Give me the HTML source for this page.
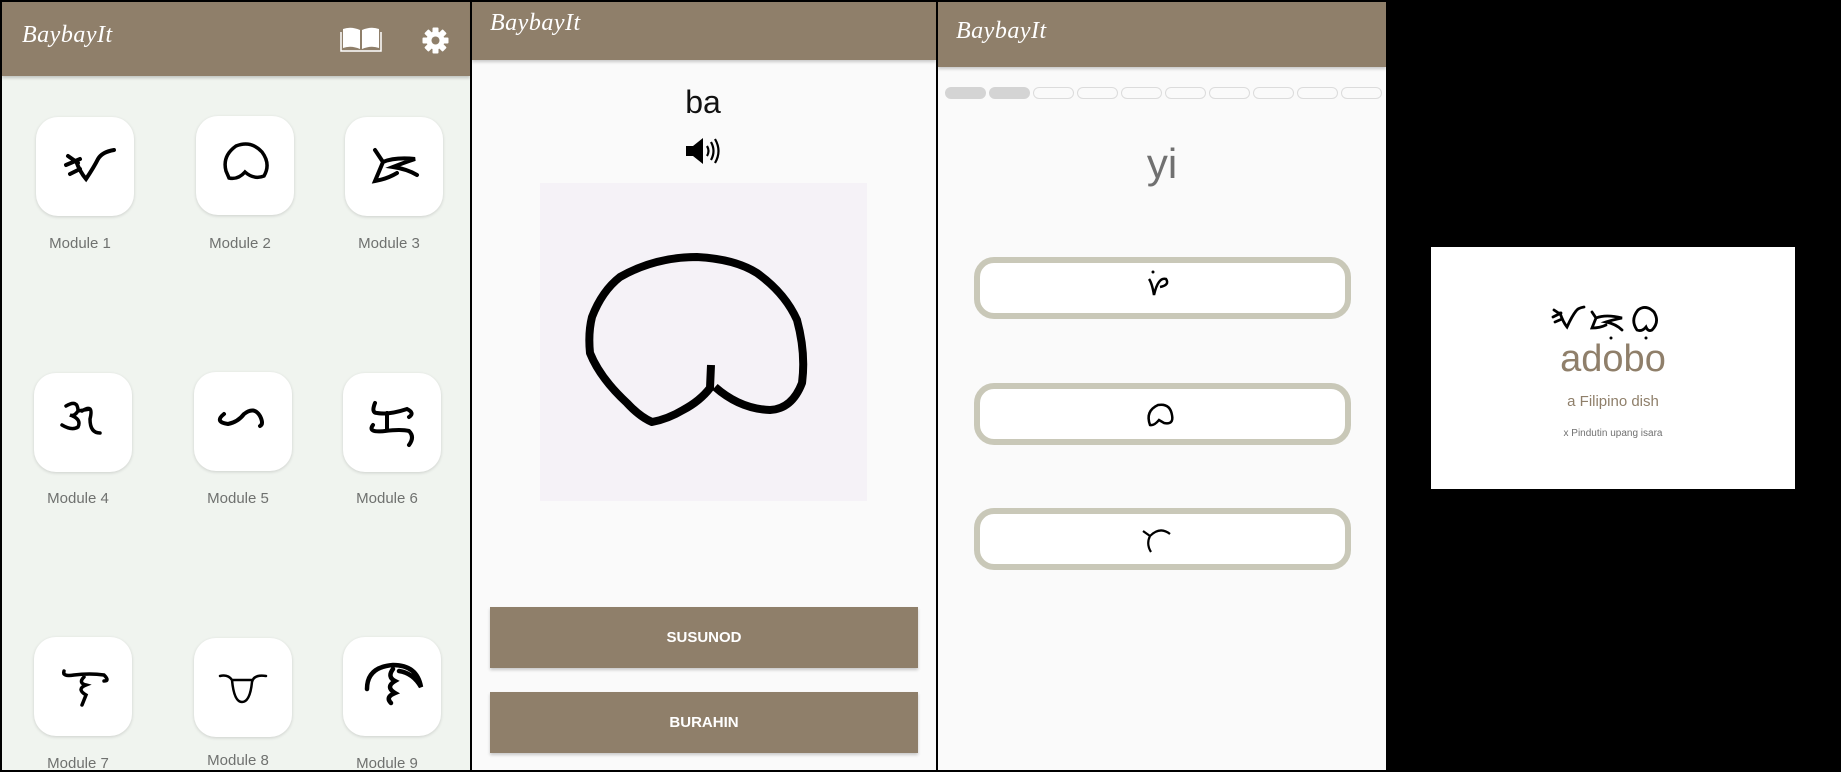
<!DOCTYPE html>
<html><head><meta charset="utf-8">
<style>
*{margin:0;padding:0;box-sizing:border-box}
body{width:1841px;height:772px;background:#000;position:relative;overflow:hidden;font-family:"Liberation Sans",Roboto,sans-serif}
.abs{position:absolute}
.logo{font-family:"Liberation Serif",serif;font-style:italic;color:#fff;font-size:24px;letter-spacing:0.5px}
.tile{position:absolute;width:98px;height:99px;background:#fff;border-radius:22px;box-shadow:0 1px 3px rgba(0,0,0,.15)}
.tile svg{position:absolute;left:0;top:0}
.lbl{position:absolute;width:140px;text-align:center;font-size:15px;color:#6f716f}
.btn{position:absolute;left:490px;width:428px;height:61px;background:#8f7f6a;color:#fff;font-weight:bold;font-size:15px;text-align:center;line-height:61px;box-shadow:0 2px 3px rgba(0,0,0,.2)}
.opt{position:absolute;left:974px;width:377px;height:62px;border:6px solid #c9c8b8;border-radius:20px;background:#fff}
.pill{position:absolute;top:87px;width:41px;height:12px;border-radius:6px;border:1px solid #dcdcdc;background:#fafafa}
</style></head><body>

<!-- Panel 1 -->
<div class="abs" style="left:2px;top:2px;width:468px;height:768px;background:#f0f4ef"></div>
<div class="abs" style="left:2px;top:2px;width:468px;height:74px;background:#8f7f6a;box-shadow:0 2px 3px rgba(0,0,0,.2)"></div>
<div class="abs logo" style="left:22px;top:22px">BaybayIt</div>
<svg class="abs" style="left:340px;top:26px" width="42" height="27" viewBox="0 0 42 27">
<path d="M3 3 Q11 0 20 4 V23 Q11 19 3 22 Z M22 4 Q31 0 39 3 V22 Q31 19 22 23 Z" fill="#fff"/>
<path d="M1 6 V25 H41 V6" fill="none" stroke="#fff" stroke-width="1.5"/>
</svg>
<svg class="abs" style="left:422px;top:27px" width="27" height="27" viewBox="-13.5 -13.5 27 27">
<g fill="#fff"><circle r="9"/>
<rect x="-3" y="-13" width="6" height="26" rx="1"/>
<rect x="-3" y="-13" width="6" height="26" rx="1" transform="rotate(45)"/>
<rect x="-3" y="-13" width="6" height="26" rx="1" transform="rotate(90)"/>
<rect x="-3" y="-13" width="6" height="26" rx="1" transform="rotate(135)"/></g>
<circle r="4" fill="#8f7f6a"/>
</svg>

<div class="tile" style="left:36px;top:117px"><svg width="98" height="99"><g fill="none" stroke="#000" stroke-width="4" stroke-linecap="round"><path d="M32 39 L42 46 M30 48 L44 42 M34 57 L44 52 M40 44 Q44 55 50 62 Q58 50 62 42 Q66 35 78 33"/></g></svg></div>
<div class="tile" style="left:196px;top:116px"><svg width="98" height="99"><path d="M30 55 Q26 40 40 30 Q55 24 66 36 Q75 48 68 60 Q58 64 49 56 Q42 64 33 62 Z" fill="none" stroke="#000" stroke-width="3.5"/></svg></div>
<div class="tile" style="left:345px;top:117px"><svg width="98" height="99"><path d="M30 33 L38 45 Q50 40 70 42 Q58 46 48 50 Q62 52 72 58 M38 45 L30 64 Q42 62 52 56" fill="none" stroke="#000" stroke-width="4" stroke-linecap="round"/></svg></div>

<div class="tile" style="left:34px;top:373px"><svg width="98" height="99"><path d="M32 33 Q44 26 44 38 Q40 44 36 42 Q48 46 44 54 Q38 58 28 52 M48 38 Q60 30 56 46 Q56 60 66 60 M44 38 L56 36" fill="none" stroke="#000" stroke-width="3.5" stroke-linecap="round"/></svg></div>
<div class="tile" style="left:194px;top:372px"><svg width="98" height="99"><path d="M30 42 Q20 50 34 52 Q44 50 50 42 Q60 34 66 44 Q70 52 66 54" fill="none" stroke="#000" stroke-width="4" stroke-linecap="round"/></svg></div>
<div class="tile" style="left:343px;top:373px"><svg width="98" height="99"><path d="M32 30 Q28 40 34 40 Q46 42 64 36 Q72 40 66 44 M44 40 L44 56 M30 52 Q24 60 42 58 Q58 56 66 58 Q72 64 66 72" fill="none" stroke="#000" stroke-width="4" stroke-linecap="round"/></svg></div>

<div class="tile" style="left:34px;top:637px"><svg width="98" height="99"><path d="M30 34 Q28 40 40 38 Q56 36 70 38 Q76 44 70 44 M50 40 Q44 46 52 48 Q42 52 52 58 L48 68" fill="none" stroke="#000" stroke-width="3.5" stroke-linecap="round"/></svg></div>
<div class="tile" style="left:194px;top:638px"><svg width="98" height="99"><path d="M26 38 Q34 36 38 42 Q40 64 48 64 Q56 64 58 44 Q60 36 72 38 M38 42 L58 42" fill="none" stroke="#000" stroke-width="2.5" stroke-linecap="round"/></svg></div>
<div class="tile" style="left:343px;top:637px"><svg width="98" height="99"><path d="M24 52 Q24 30 50 28 Q74 28 78 50 Q70 36 56 34 M50 32 Q44 40 52 44 Q42 50 52 56 Q42 60 48 66" fill="none" stroke="#000" stroke-width="4.5" stroke-linecap="round"/></svg></div>

<div class="lbl" style="left:10px;top:235px">Module 1</div>
<div class="lbl" style="left:170px;top:235px">Module 2</div>
<div class="lbl" style="left:319px;top:235px">Module 3</div>
<div class="lbl" style="left:8px;top:490px">Module 4</div>
<div class="lbl" style="left:168px;top:490px">Module 5</div>
<div class="lbl" style="left:317px;top:490px">Module 6</div>
<div class="lbl" style="left:8px;top:755px">Module 7</div>
<div class="lbl" style="left:168px;top:752px">Module 8</div>
<div class="lbl" style="left:317px;top:755px">Module 9</div>

<!-- Panel 2 -->
<div class="abs" style="left:472px;top:2px;width:464px;height:768px;background:#fafafa"></div>
<div class="abs" style="left:472px;top:2px;width:464px;height:58px;background:#8f7f6a;box-shadow:0 2px 3px rgba(0,0,0,.2)"></div>
<div class="abs logo" style="left:490px;top:10px">BaybayIt</div>
<div class="abs" style="left:653px;top:84px;width:100px;text-align:center;font-size:32px;color:#111">ba</div>
<svg class="abs" style="left:686px;top:137px" width="37" height="28" viewBox="0 0 37 28">
<path d="M0 9 H7 L17 1 V27 L7 19 H0 Z" fill="#000"/>
<g fill="none" stroke="#000" stroke-width="2.2"><path d="M21 9 Q24 14 21 19"/><path d="M25 5 Q30 14 25 23"/><path d="M29 2 Q36 14 29 26"/></g>
</svg>
<div class="abs" style="left:540px;top:183px;width:327px;height:318px;background:#f5f2f7"></div>
<svg class="abs" style="left:540px;top:183px" width="327" height="318">
<path d="M171 182 L170 205 Q160 218 143 227 Q128 236 112 239 Q100 234 87 220 Q60 195 50 170 Q48 150 52 134 Q62 108 80 94 Q115 74 157 74 Q195 76 217 90 Q245 110 257 137 Q266 170 262 200 Q252 226 230 227 Q200 226 175 204" fill="none" stroke="#000" stroke-width="8" stroke-linejoin="round"/>
</svg>
<div class="btn" style="top:607px">SUSUNOD</div>
<div class="btn" style="top:692px">BURAHIN</div>

<!-- Panel 3 -->
<div class="abs" style="left:938px;top:2px;width:448px;height:768px;background:#fafafa"></div>
<div class="abs" style="left:938px;top:2px;width:448px;height:65px;background:#8f7f6a;box-shadow:0 2px 3px rgba(0,0,0,.2)"></div>
<div class="abs logo" style="left:956px;top:18px">BaybayIt</div>
<div class="pill" style="left:945px;background:#d4d4d4;border-color:#d4d4d4"></div>
<div class="pill" style="left:989px;background:#d4d4d4;border-color:#d4d4d4"></div>
<div class="pill" style="left:1033px"></div>
<div class="pill" style="left:1077px"></div>
<div class="pill" style="left:1121px"></div>
<div class="pill" style="left:1165px"></div>
<div class="pill" style="left:1209px"></div>
<div class="pill" style="left:1253px"></div>
<div class="pill" style="left:1297px"></div>
<div class="pill" style="left:1341px"></div>
<div class="abs" style="left:1112px;top:140px;width:100px;text-align:center;font-size:42px;color:#707070">yi</div>
<div class="opt" style="top:257px"><svg width="365" height="50"><path d="M169 16 Q172 20 174 32 Q178 14 186 16 Q190 22 180 24" fill="none" stroke="#000" stroke-width="2.5"/><circle cx="173" cy="9" r="1.5"/></svg></div>
<div class="opt" style="top:383px"><svg width="365" height="50"><path d="M170 36 Q165 22 178 16 Q190 14 192 26 Q194 36 184 34 L179 31 Q174 37 170 36 Z" fill="none" stroke="#000" stroke-width="2.5"/></svg></div>
<div class="opt" style="top:508px"><svg width="365" height="50"><path d="M163 17 L170 22 Q180 12 190 20 M170 22 Q166 30 171 38" fill="none" stroke="#000" stroke-width="2.2"/></svg></div>

<!-- Panel 4 -->
<div class="abs" style="left:1431px;top:247px;width:364px;height:242px;background:#fff"></div>
<svg class="abs" style="left:1550px;top:300px" width="130" height="45">
<g fill="none" stroke="#000" stroke-width="2.8" stroke-linecap="round">
<path d="M4 10 L10 14 M3 17 L11 13 M5 22 L12 19 M10 13 Q13 22 17 27 Q22 16 26 11 Q28 8 34 7"/>
<path d="M42 12 L46 18 Q56 14 72 18 Q62 20 56 22 Q66 24 72 30 M46 18 L42 28 Q50 28 56 25"/>
<path d="M87 30 Q80 20 88 10 Q96 4 104 12 Q110 22 102 30 Q98 32 96 27 Q92 32 87 30 Z"/>
</g>
<circle cx="61" cy="38" r="1.5"/><circle cx="96" cy="38" r="1.5"/>
</svg>
<div class="abs" style="left:1431px;top:338px;width:364px;text-align:center;font-size:38px;color:#8f7f6a">adobo</div>
<div class="abs" style="left:1431px;top:393px;width:364px;text-align:center;font-size:15px;color:#8f7f6a">a Filipino dish</div>
<div class="abs" style="left:1431px;top:428px;width:364px;text-align:center;font-size:10px;color:#707070">x Pindutin upang isara</div>

</body></html>
